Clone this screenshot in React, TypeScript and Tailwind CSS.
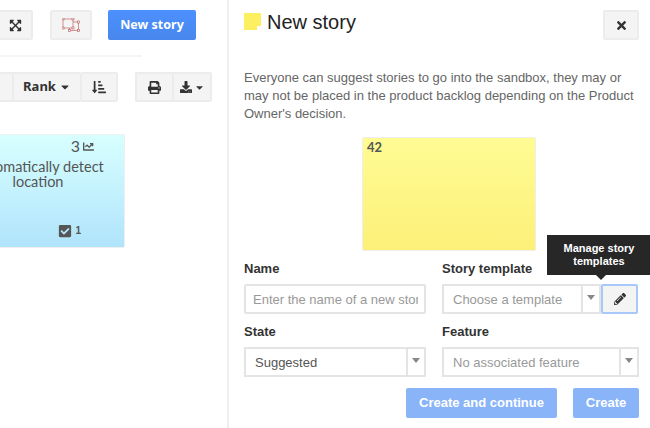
import { FaCaretDown, FaChartLine, FaCheckSquare, FaDownload, FaExpandArrowsAlt, FaPencilAlt, FaPrint, FaSortAmountDownAlt, FaTimes } from "react-icons/fa";

const greyBtn = "flex h-[30px] items-center justify-center rounded-[2px] border-2 border-[#ececec] bg-[#f4f4f4] text-[#333]";
const labelCls = "block text-[13px] font-bold leading-[16px] text-[#333]";

function Select({ value, muted }: { value: string; muted?: boolean }) {
  return (
    <div className="flex h-[30px] w-full items-stretch border-2 border-[#e4e4e4] bg-white">
      <div className={`flex flex-1 items-center truncate pl-[9px] pt-[1px] text-[13px] ${muted ? "text-[#999]" : "text-[#555]"}`}>{value}</div>
      <div className="flex w-[18px] items-start justify-center border-l-2 border-[#e4e4e4] pt-[9px]">
        <div className="h-0 w-0 border-x-[4px] border-t-[5px] border-x-transparent border-t-[#888]" />
      </div>
    </div>
  );
}

function MarqueeIcon() {
  return (
    <svg width="18" height="14" viewBox="0 0 18 14" fill="none" stroke="#c06a6a" strokeWidth="0.7">
      <rect x="1" y="1" width="10" height="9" />
      <path d="M11 4h5.5v8.5h-9V10" />
      <g fill="#fff">
        <rect x="0" y="0" width="2" height="2" />
        <rect x="10" y="0" width="2" height="2" />
        <rect x="0" y="9" width="2" height="2" />
        <rect x="10" y="9" width="2" height="2" />
        <rect x="15.5" y="3" width="2" height="2" />
        <rect x="15.5" y="11.5" width="2" height="2" />
        <rect x="6.5" y="11.5" width="2" height="2" />
      </g>
    </svg>
  );
}

function Board() {
  return (
    <div className="w-[229px] shrink-0 overflow-hidden border-r-2 border-[#eeeeee] pt-[10px]">
      <div className="flex items-center">
        <div className={`${greyBtn} -ml-[7px] w-[40px] pl-[5px] text-[13px]`}><FaExpandArrowsAlt /></div>
        <div className={`${greyBtn} ml-[17px] w-[42px]`}><MarqueeIcon /></div>
        <div className="ml-[16px] flex h-[30px] w-[88px] items-center justify-center rounded-[2px] bg-gradient-to-b from-[#4d90fe] to-[#4787ed] text-[12.5px] font-bold text-white">New story</div>
      </div>
      <div className="mt-[15px] h-[2px] w-[142px] bg-[#f5f5f5]" />
      <div className="mt-[15px] flex items-center">
        <div className={`${greyBtn} -ml-[10px] w-[22px] rounded-none border-r-0`} />
        <div className={`${greyBtn} w-[68px] gap-[3px] rounded-none border-r-0 text-[13px] font-bold`}>
          Rank <FaCaretDown className="text-[12px]" />
        </div>
        <div className={`${greyBtn} w-[38px] text-[14px]`}><FaSortAmountDownAlt /></div>
        <div className={`${greyBtn} ml-[17px] w-[37px] rounded-r-none border-r-0 text-[13px]`}><FaPrint /></div>
        <div className={`${greyBtn} w-[40px] gap-[2px] rounded-l-none text-[12px]`}>
          <FaDownload /> <FaCaretDown className="text-[11px]" />
        </div>
      </div>
      <div className="mt-[32px] -ml-[49px] flex h-[114px] w-[174px] flex-col rounded-[2px] border border-[#eeeeee] bg-gradient-to-b from-[#d8ffff] to-[#b0e4fb] font-['Lato',sans-serif] text-[#555]">
        <div className="flex items-center justify-end gap-[3px] pr-[30px] pt-[1px] text-[16px] leading-[20px]">
          3 <FaChartLine className="text-[11px]" />
        </div>
        <div className="mt-[3px] px-[6px] text-center text-[14.5px] leading-[15px]">Automatically detect location</div>
        <div className="mt-auto flex items-center justify-end gap-[3px] pb-[9px] pr-[43px] font-['Liberation_Sans',sans-serif] text-[10px] font-bold">
          <FaCheckSquare className="text-[14px]" /> 1
        </div>
      </div>
    </div>
  );
}

function NewStoryPanel() {
  return (
    <div className="flex-1 pl-[15px] pr-[11px] pt-[10px] font-['Liberation_Sans',sans-serif]">
      <div className="flex items-start justify-between">
        <div className="flex items-start gap-[6px]">
          <div className="relative mt-[3px] h-[17px] w-[17px] bg-[#fdf060]">
            <div className="absolute bottom-0 right-0 h-[4px] w-[4px] bg-white" />
          </div>
          <h1 className="text-[20px] leading-[24px] text-[#222]">New story</h1>
        </div>
        <div className={`${greyBtn} w-[36px] text-[13px]`}><FaTimes /></div>
      </div>
      <p className="mt-[29px] w-[392px] text-[13px] leading-[18px] text-[#666]">
        Everyone can suggest stories to go into the sandbox, they may or may not be placed in the product backlog depending on the Product Owner's decision.
      </p>
      <div className="mt-[14px] ml-[118px] h-[114px] w-[174px] rounded-[2px] border border-[#eeeeee] bg-gradient-to-b from-[#fffc94] to-[#fcf078] pl-[4px] font-['Lato',sans-serif] text-[13px] font-bold leading-[18px] text-[#555]">42</div>
      <div className="mt-[10px] grid grid-cols-[182px_197px] gap-x-[16px]">
        <div>
          <label className={labelCls}>Name</label>
          <input placeholder="Enter the name of a new story" className="mt-[7px] block h-[30px] w-full rounded-[2px] border-2 border-[#e4e4e4] bg-white pl-[7px] pr-[6px] text-[13px] placeholder:text-[#999]" />
        </div>
        <div>
          <label className={labelCls}>Story template</label>
          <div className="mt-[7px] flex">
            <div className="w-[159px]"><Select value="Choose a template" muted /></div>
            <div className="relative flex h-[30px] w-[37px] items-center justify-center rounded-[2px] border-2 border-[#a9c8fb] bg-[#f4f4f4] text-[12px] text-[#333]">
              <FaPencilAlt />
              <div className="absolute -top-[51px] -left-[56px] flex h-[40px] w-[104px] items-center justify-center bg-[#272727] pb-[1px] text-center text-[11px] font-bold leading-[13px] text-white">
                Manage story<br />templates
              </div>
              <div className="absolute -top-[11px] -left-[7px] h-0 w-0 border-x-[5px] border-t-[5px] border-x-transparent border-t-[#272727]" />
            </div>
          </div>
        </div>
        <div className="mt-[10px]">
          <label className={labelCls}>State</label>
          <div className="mt-[7px]"><Select value="Suggested" /></div>
        </div>
        <div className="mt-[10px]">
          <label className={labelCls}>Feature</label>
          <div className="mt-[7px]"><Select value="No associated feature" muted /></div>
        </div>
      </div>
      <div className="mt-[11px] flex w-[395px] justify-end gap-[16px]">
        <div className="flex h-[30px] w-[151px] items-center justify-center rounded-[2px] bg-[#8ab4f8] text-[13px] font-bold text-white">Create and continue</div>
        <div className="flex h-[30px] w-[66px] items-center justify-center rounded-[2px] bg-[#8ab4f8] text-[13px] font-bold text-white">Create</div>
      </div>
    </div>
  );
}

export default function App() {
  return (
    <div className="flex h-[428px] w-[650px] overflow-hidden bg-white">
      <Board />
      <NewStoryPanel />
    </div>
  );
}
